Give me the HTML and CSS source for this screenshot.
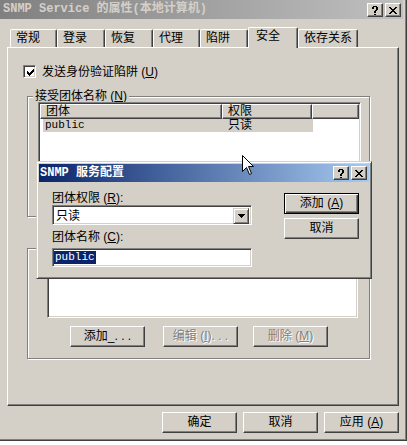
FILE: index.html
```html
<!DOCTYPE html>
<html>
<head>
<meta charset="utf-8">
<link rel="stylesheet" href="styles.css">
</head>
<body>
<div class="screen">
  <div class="window">
    <div class="titlebar">
      <span class="title-text">SNMP Service 的属性(本地计算机)</span>
      <div class="cap-btns">
        <span class="cap-btn"><svg width="6" height="9" viewBox="0 0 6 9" shape-rendering="crispEdges"><path d="M1 0h4v1H1z M0 1h2v1H0z M4 1h2v1H4z M0 2h2v1H0z M4 2h2v1H4z M4 3h2v1H4z M3 4h2v1H3z M2 5h2v1H2z M2 6h2v1H2z M2 8h2v1H2z" fill="#000"/></svg></span>
        <span class="cap-btn"><svg width="8" height="7" viewBox="0 0 8 7" shape-rendering="crispEdges"><path d="M0 0h2v1H0z M6 0h2v1H6z M1 1h2v1H1z M5 1h2v1H5z M2 2h4v1H2z M3 3h2v1H3z M2 4h4v1H2z M1 5h2v1H1z M5 5h2v1H5z M0 6h2v1H0z M6 6h2v1H6z" fill="#000"/></svg></span>
      </div>
    </div>
    <div class="tabs">
      <div class="tab w47">常规</div>
      <div class="tab w48">登录</div>
      <div class="tab w48">恢复</div>
      <div class="tab w47">代理</div>
      <div class="tab w48">陷阱</div>
      <div class="tab active w50">安全</div>
      <div class="tab w60">依存关系</div>
    </div>
    <div class="panel">
      <div class="check-row">
        <span class="checkbox"><svg width="7" height="7" viewBox="0 0 7 7" shape-rendering="crispEdges"><path d="M0 2h1v3H0z M1 3h1v3H1z M2 4h1v3H2z M3 3h1v3H3z M4 2h1v3H4z M5 1h1v3H5z M6 0h1v3H6z" fill="#000"/></svg></span>
        <span class="label">发送身份验证陷阱 (<u>U</u>)</span>
      </div>
      <div class="group g1">
        <div class="legend">接受团体名称 (<u>N</u>)</div>
        <div class="sunken listview lv1">
          <div class="lv-header">
            <div class="hcell hc1">团体</div>
            <div class="hcell hc2">权限</div>
            <div class="hcell hc3"></div>
          </div>
          <div class="lv-row">
            <span class="r1 lat">public</span>
            <span class="r2">只读</span>
          </div>
        </div>
      </div>
      <div class="group g2">
        <div class="sunken listview lv2"></div>
        <div class="grp-btns">
          <button class="btn">添加_. . .</button>
          <button class="btn disabled">编辑 (<u>I</u>). . .</button>
          <button class="btn disabled">删除 (<u>M</u>)</button>
        </div>
      </div>
    </div>
    <div class="footer">
      <button class="btn">确定</button>
      <button class="btn">取消</button>
      <button class="btn">应用 (<u>A</u>)</button>
    </div>
  </div>

  <div class="modal">
    <div class="m-title">
      <span class="m-title-text">SNMP 服务配置</span>
      <div class="cap-btns m-caps">
        <span class="cap-btn"><svg width="6" height="9" viewBox="0 0 6 9" shape-rendering="crispEdges"><path d="M1 0h4v1H1z M0 1h2v1H0z M4 1h2v1H4z M0 2h2v1H0z M4 2h2v1H4z M4 3h2v1H4z M3 4h2v1H3z M2 5h2v1H2z M2 6h2v1H2z M2 8h2v1H2z" fill="#000"/></svg></span>
        <span class="cap-btn"><svg width="8" height="7" viewBox="0 0 8 7" shape-rendering="crispEdges"><path d="M0 0h2v1H0z M6 0h2v1H6z M1 1h2v1H1z M5 1h2v1H5z M2 2h4v1H2z M3 3h2v1H3z M2 4h4v1H2z M1 5h2v1H1z M5 5h2v1H5z M0 6h2v1H0z M6 6h2v1H6z" fill="#000"/></svg></span>
      </div>
    </div>
    <div class="m-body">
      <div class="m-left">
        <div class="m-label">团体权限 (<u>R</u>):</div>
        <div class="sunken combo">
          <span class="combo-text">只读</span>
          <span class="dd-btn"><svg width="7" height="4" viewBox="0 0 7 4" shape-rendering="crispEdges"><path d="M0 0h7v1H0z M1 1h5v1H1z M2 2h3v1H2z M3 3h1v1H3z" fill="#000"/></svg></span>
        </div>
        <div class="m-label m-label2">团体名称 (<u>C</u>):</div>
        <div class="sunken edit"><span class="sel-text">public</span></div>
      </div>
      <div class="m-right">
        <button class="btn default">添加 (<u>A</u>)</button>
        <button class="btn">取消</button>
      </div>
    </div>
  </div>

  <svg class="cursor" width="13" height="21" viewBox="0 0 13 21"><polygon points="0.5,0.5 0.5,16.5 4.5,12.5 7.5,19.5 9.5,18.5 6.5,11.5 11.5,11.5" fill="#fff" stroke="#000" stroke-width="1" stroke-linejoin="miter"/></svg>
</div>
</body>
</html>
```

FILE: styles.css
```css
html, body {
  margin: 0;
  padding: 0;
  background: #fff;
}

.screen {
  position: relative;
  width: 407px;
  height: 445px;
  overflow: hidden;
  background: #fff;
  font-family: "Liberation Sans", "Noto Sans CJK SC", sans-serif;
  font-size: 12px;
  color: #000;
}

u {
  text-decoration: underline;
  text-underline-offset: 1px;
}

.window {
  display: flex;
  flex-direction: column;
  width: 407px;
  height: 441px;
  box-sizing: border-box;
  background: #d4d0c8;
  border-right: 1px solid #404040;
  border-bottom: 1px solid #404040;
  box-shadow: inset -1px -1px 0 #808080;
}

/* caption */
.titlebar {
  flex: none;
  width: 403px;
  height: 19px;
  display: flex;
  align-items: flex-start;
  background: linear-gradient(to right, #808080, #c0c0c0);
  color: #d4d0c8;
  font-weight: bold;
}

.title-text {
  padding-left: 3px;
  line-height: 19px;
  white-space: nowrap;
  font-family: "Liberation Mono", "Noto Sans CJK SC", monospace;
  font-size: 12px;
}

.cap-btns {
  margin-left: auto;
  display: flex;
  gap: 2px;
  padding-top: 3px;
  padding-right: 2px;
}

.cap-btn {
  width: 16px;
  height: 14px;
  box-sizing: border-box;
  border: 1px solid;
  border-color: #fff #404040 #404040 #fff;
  box-shadow: inset -1px -1px 0 #808080;
  background: #d4d0c8;
  display: flex;
  align-items: center;
  justify-content: center;
}

/* tabs */
.tabs {
  flex: none;
  display: flex;
  align-items: flex-end;
  height: 21px;
  margin-top: 8px;
  margin-left: 10px;
  margin-bottom: -1px;
  position: relative;
  z-index: 1;
}

.tab {
  box-sizing: border-box;
  height: 18px;
  margin-bottom: 1px;
  border-top: 1px solid #fff;
  border-left: 1px solid #fff;
  border-right: 1px solid #404040;
  box-shadow: inset -1px 0 0 #808080;
  border-top-left-radius: 2px;
  border-top-right-radius: 2px;
  padding-left: 5px;
  line-height: 16px;
  background: #d4d0c8;
  white-space: nowrap;
}

.tab.active {
  height: 21px;
  margin-bottom: 0;
  padding-left: 7px;
  line-height: 16px;
}

.w47 { width: 47px; }
.w48 { width: 48px; }
.w50 { width: 50px; }
.w60 { width: 60px; }

/* panel */
.panel {
  flex: none;
  margin-left: 7px;
  width: 392px;
  height: 359px;
  box-sizing: border-box;
  border-top: 1px solid #fff;
  border-left: 1px solid #fff;
  border-right: 1px solid #404040;
  border-bottom: 1px solid #404040;
  box-shadow: inset -1px -1px 0 #808080;
  padding: 17px 0 0 15px;
  display: flex;
  flex-direction: column;
  align-items: flex-start;
}

.check-row {
  display: flex;
  align-items: center;
  height: 13px;
  gap: 6px;
}

.checkbox {
  width: 13px;
  height: 13px;
  box-sizing: border-box;
  background: #fff;
  border: 1px solid;
  border-color: #808080 #fff #fff #808080;
  box-shadow: inset 1px 1px 0 #404040, inset -1px -1px 0 #d4d0c8;
  display: flex;
  align-items: center;
  justify-content: center;
  padding: 1px 0 0 1px;
}

.label {
  line-height: 14px;
  white-space: nowrap;
}

.group {
  box-sizing: border-box;
  width: 343px;
  margin-left: 4px;
  border: 1px solid #808080;
  box-shadow: 1px 1px 0 #fff, inset 1px 1px 0 #fff;
  display: flex;
  flex-direction: column;
  align-items: flex-start;
}

.g1 {
  margin-top: 18px;
  height: 121px;
}

.g2 {
  margin-top: 31px;
  height: 111px;
}

.legend {
  margin: -7px 0 0 5px;
  padding: 0 2px;
  height: 12px;
  line-height: 12px;
  background: #d4d0c8;
  white-space: nowrap;
}

.sunken {
  box-sizing: border-box;
  background: #fff;
  border: 1px solid;
  border-color: #808080 #fff #fff #808080;
  box-shadow: inset 1px 1px 0 #404040, inset -1px -1px 0 #d4d0c8;
}

.listview {
  padding: 1px;
}

.lv1 {
  margin-left: 10px;
  width: 323px;
  height: 107px;
}

.lv2 {
  margin: 13px 0 0 19px;
  width: 311px;
  height: 56px;
}

.lv-header {
  display: flex;
  height: 15px;
}

.hcell {
  box-sizing: border-box;
  height: 15px;
  border-top: 1px solid #fff;
  border-left: 1px solid #fff;
  border-right: 1px solid #404040;
  border-bottom: 1px solid #404040;
  box-shadow: inset -1px -1px 0 #808080;
  background: #d4d0c8;
  padding-left: 5px;
  line-height: 13px;
}

.hc1 { width: 182px; }
.hc2 { width: 90px; }
.hc3 { flex: 1; }

.lv-row {
  display: flex;
  margin-left: 3px;
  width: 270px;
  height: 13px;
  line-height: 13px;
  background: #d4d0c8;
}

.r1 {
  width: 179px;
  padding-left: 2px;
  box-sizing: border-box;
}

.r2 {
  padding-left: 6px;
}

.lat {
  font-family: "Liberation Mono", monospace;
  font-size: 11px;
}

/* buttons */
.btn {
  width: 75px;
  height: 21px;
  box-sizing: border-box;
  margin: 0;
  padding: 0;
  border: 1px solid;
  border-color: #fff #404040 #404040 #fff;
  box-shadow: inset -1px -1px 0 #808080;
  background: #d4d0c8;
  font: inherit;
  color: #000;
  line-height: 17px;
  text-align: center;
  white-space: nowrap;
}

.btn.disabled {
  color: #808080;
  text-shadow: 1px 1px 0 #fff;
}

.btn.default {
  border: 1px solid #000;
  box-shadow: inset 1px 1px 0 #fff, inset -1px -1px 0 #404040, inset -2px -2px 0 #808080;
}

.grp-btns {
  display: flex;
  margin-top: 8px;
  padding-left: 42px;
}

.grp-btns .btn + .btn {
  margin-left: 18px;
}

.grp-btns .btn + .btn + .btn {
  margin-left: 15px;
}

.footer {
  display: flex;
  justify-content: flex-end;
  gap: 6px;
  padding-right: 7px;
  margin-top: 6px;
}

/* modal dialog */
.modal {
  position: absolute;
  left: 36px;
  top: 161px;
  width: 336px;
  height: 118px;
  box-sizing: border-box;
  background: #d4d0c8;
  border: 1px solid;
  border-color: #d4d0c8 #404040 #404040 #d4d0c8;
  box-shadow: inset 1px 1px 0 #fff, inset -1px -1px 0 #808080;
  padding: 2px;
  display: flex;
  flex-direction: column;
  z-index: 2;
}

.m-title {
  flex: none;
  height: 18px;
  display: flex;
  background: linear-gradient(to right, #0a246a, #a6caf0);
  color: #fff;
  font-weight: bold;
}

.m-title-text {
  padding-left: 1px;
  line-height: 18px;
  white-space: nowrap;
  font-family: "Liberation Mono", "Noto Sans CJK SC", monospace;
}

.m-caps {
  padding-top: 2px;
}

.m-body {
  display: flex;
  padding: 9px 10px 0 13px;
}

.m-left {
  width: 200px;
  display: flex;
  flex-direction: column;
}

.m-label {
  height: 14px;
  line-height: 14px;
  white-space: nowrap;
}

.m-label2 {
  margin-top: 5px;
}

.combo {
  height: 20px;
  display: flex;
  padding: 2px;
}

.combo-text {
  flex: 1;
  line-height: 16px;
  padding-left: 1px;
}

.dd-btn {
  width: 16px;
  height: 16px;
  box-sizing: border-box;
  border: 1px solid;
  border-color: #d4d0c8 #404040 #404040 #d4d0c8;
  box-shadow: inset 1px 1px 0 #fff, inset -1px -1px 0 #808080;
  background: #d4d0c8;
  display: flex;
  align-items: center;
  justify-content: center;
}

.edit {
  height: 19px;
  margin-top: 4px;
  padding: 2px 2px 2px 1px;
  display: flex;
  align-items: center;
}

.sel-text {
  background: #0a246a;
  color: #fff;
  font-family: "Liberation Mono", monospace;
  font-size: 11px;
  line-height: 13px;
  padding: 0 1px;
}

.m-right {
  margin-left: auto;
  padding-top: 2px;
  display: flex;
  flex-direction: column;
  gap: 4px;
}

.cursor {
  position: absolute;
  left: 242px;
  top: 155px;
  z-index: 3;
}
```
